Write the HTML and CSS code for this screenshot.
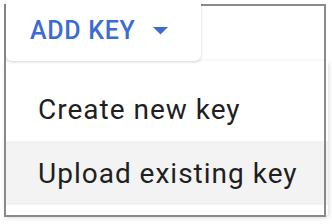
FILE: index.html
```html
<!DOCTYPE html>
<html>
<head>
<meta charset="utf-8">
<link rel="stylesheet" href="styles.css">
</head>
<body>
<div class="stage">
  <button class="add-key">
    <span class="label">ADD KEY</span>
    <svg class="caret" width="15" height="8" viewBox="0 0 15 8"><path d="M0 0 L15 0 L7.5 7.5 Z" fill="#3d6bd4"/></svg>
  </button>
  <div class="menu">
    <div class="item">Create new key</div>
    <div class="item hover">Upload existing key</div>
  </div>
  <div class="highlight"></div>
</div>
</body>
</html>
```
FILE: styles.css
```css
html, body {
  margin: 0;
  padding: 0;
  background: #ffffff;
}
.stage {
  position: relative;
  width: 332px;
  height: 224px;
  overflow: hidden;
  font-family: Roboto, "Liberation Sans", sans-serif;
}
.add-key {
  position: relative;
  z-index: 3;
  display: flex;
  align-items: center;
  margin-left: 6px;
  width: 195px;
  height: 61px;
  padding: 0 0 0 24px;
  border: none;
  background: #ffffff;
  border-radius: 0 0 6px 6px;
  box-shadow: 0 1px 3px rgba(0, 0, 0, 0.18);
  font-family: Roboto, "Liberation Sans", sans-serif;
  font-weight: 500;
  font-size: 25px;
  letter-spacing: 0.7px;
  color: #3d6bd4;
  cursor: pointer;
}
.caret {
  margin-left: 17px;
  margin-top: 1px;
}
.menu {
  position: relative;
  z-index: 1;
  margin-left: 6px;
  width: 322px;
  padding: 16px 0 10px 0;
  background: #ffffff;
  box-shadow: 0 2px 5px rgba(0, 0, 0, 0.2);
}
.item {
  height: 64px;
  display: flex;
  align-items: center;
  padding-left: 32px;
  font-size: 28px;
  letter-spacing: 1px;
  color: #1f1f1f;
}
.item.hover {
  background: #f3f3f3;
}
.highlight {
  position: absolute;
  z-index: 2;
  left: 4px;
  top: 4px;
  width: 318px;
  height: 209px;
  border: 2px solid #8a8a8a;
  pointer-events: none;
}
```
